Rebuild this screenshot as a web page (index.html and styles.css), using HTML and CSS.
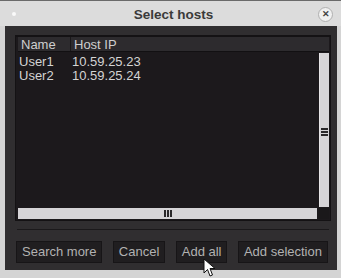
FILE: index.html
```html
<!DOCTYPE html>
<html>
<head>
<meta charset="utf-8">
<link rel="stylesheet" href="styles.css">
</head>
<body>
<div class="screen">
  <div class="titlebar">
    <span class="dot"></span>
    <span class="title">Select hosts</span>
    <span class="close">&#x2715;</span>
  </div>
  <div class="window">
    <div class="list">
      <div class="header">
        <div class="col-name">Name</div>
        <div class="col-ip">Host IP</div>
      </div>
      <div class="rows">
        <div class="row"><span class="col-name">User1</span><span class="col-ip">10.59.25.23</span></div>
        <div class="row"><span class="col-name">User2</span><span class="col-ip">10.59.25.24</span></div>
      </div>
      <div class="vscroll"><span class="vgrip"><i></i><i></i><i></i></span></div>
      <div class="hscroll"><span class="hgrip"><i></i><i></i><i></i></span></div>
      <div class="corner"></div>
    </div>
    <div class="sep"></div>
    <div class="buttons">
      <button class="btn">Search more</button>
      <button class="btn">Cancel</button>
      <button class="btn">Add all</button>
      <button class="btn">Add selection</button>
    </div>
  </div>
  <svg class="cursor" width="13" height="20" viewBox="0 0 13 20">
    <path d="M1 1 L1 15 L4.5 11.5 L7 18 L9.5 17 L7 10.5 L12 10.5 Z" fill="#fff" stroke="#111" stroke-width="1"/>
  </svg>
</div>
</body>
</html>
```
FILE: styles.css
```css
* { box-sizing: border-box; }
html, body { margin: 0; padding: 0; }
body { background: #d6d6d6; font-family: "Liberation Sans", Arial, sans-serif; }
.screen { position: relative; width: 341px; height: 278px; overflow: hidden; background: #d4d4d4; border-top: 1px solid #6a6a6a; }
.titlebar {
  height: 25px;
  display: grid;
  grid-template-columns: 30px 1fr 30px;
  align-items: center;
  background: #dcdcdc;
}
.dot { width: 4px; height: 4px; border-radius: 50%; background: #fafafa; justify-self: center; margin-left: -2px; }
.title { text-align: center; font-weight: bold; font-size: 13.5px; color: #3a3a3a; padding-left: 6px; padding-top: 1px; }
.close {
  width: 15px; height: 15px; border-radius: 50%;
  background: #f0f0f0; border: 1px solid #b0b0b0;
  color: #444; font-size: 9px; font-weight: bold;
  display: flex; align-items: center; justify-content: center;
  justify-self: center; margin-left: -1px; margin-top: 1px;
}
.window {
  margin: 0 4px 0 5px;
  height: 244px;
  background: #302e30;
  padding: 9px 6px 0 10px;
  display: flex; flex-direction: column;
}
.list {
  height: 186px;
  background: #1c191c;
  border: 1px solid #141214;
  border-top-width: 2px;
  padding: 0 1px 1px 1px;
  display: grid;
  grid-template-columns: 1fr 10px;
  grid-template-rows: 15px 1fr 11px;
  column-gap: 2px;
  row-gap: 1px;
  font-size: 13px;
}
.header {
  grid-column: 1 / 3;
  display: flex;
  background: #2d2b2e;
  color: #cfcfcf;
  line-height: 15px;
  border-bottom: 1px solid #121012;
  margin-left: 1px;
}
.header .col-name { width: 53px; padding-left: 3px; border-right: 1px solid #1a181a; }
.header .col-ip { padding-left: 3px; }
.rows { padding-top: 2px; color: #d4d4d4; }
.row { display: flex; height: 14px; line-height: 14px; }
.row .col-name { width: 54px; padding-left: 2px; }
.row .col-ip { padding-left: 1px; }
.vscroll {
  background: #d6d4d7;
  display: flex; align-items: center; justify-content: center;
  border-left: 1px solid #e6e4e6;
}
.vgrip { display: flex; flex-direction: column; gap: 1px; margin-top: 4px; }
.vgrip i { display: block; width: 7px; height: 2px; background: #2a282a; }
.hscroll {
  background: #d6d4d7;
  display: flex; align-items: center; justify-content: center;
  margin-left: 1px;
}
.hgrip { display: flex; gap: 1px; margin-left: 1px; }
.hgrip i { display: block; width: 2px; height: 7px; background: #2a282a; }
.corner { background: #1a181a; }
.sep { height: 1px; background: #1b191b; margin: 8px 2px 0 2px; }
.buttons {
  display: flex;
  justify-content: space-between;
  margin: 11px 3px 0 1px;
}
.btn {
  height: 22px;
  padding: 0 5px;
  background: #201e20;
  border: 1px solid #171517;
  color: #b2b2b2;
  font-family: "Liberation Sans", Arial, sans-serif;
  font-size: 13px;
  line-height: 20px;
}
.cursor { position: absolute; left: 203px; top: 257px; }
```
